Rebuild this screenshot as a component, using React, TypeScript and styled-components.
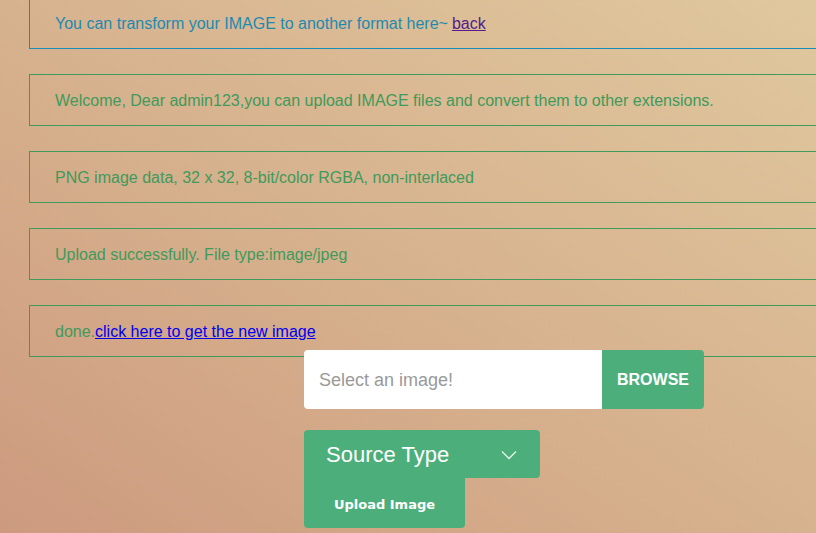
import React from "react";
import styled, { createGlobalStyle } from "styled-components";

const Global = createGlobalStyle`
  html, body { margin: 0; padding: 0; }
  body {
    width: 816px;
    height: 533px;
    overflow: hidden;
    font-family: "Liberation Sans", Arial, sans-serif;
    background: linear-gradient(to top right, #cd9a7f 0%, #d6b08d 45%, #e0c89e 100%);
  }
`;

const Page = styled.div`
  padding-left: 29px;
  margin-top: -3px;
  display: flex;
  flex-direction: column;
`;

const MsgBox = styled.div<{ $tone: "blue" | "green" }>`
  box-sizing: border-box;
  width: 820px;
  height: 52px;
  margin-bottom: 25px;
  padding: 2px 25px 0;
  display: flex;
  align-items: center;
  font-size: 16px;
  border: 1px solid ${(p) => (p.$tone === "blue" ? "#1a8cb8" : "#3f9a5b")};
  color: ${(p) => (p.$tone === "blue" ? "#1d8ab0" : "#3f9a5b")};
  white-space: nowrap;
`;

const Link = styled.a<{ $visited?: boolean }>`
  color: ${(p) => (p.$visited ? "#551a8b" : "#0000ee")};
  text-decoration: underline;
  margin-left: ${(p) => (p.$visited ? "4px" : "0")};
`;

const Form = styled.form`
  margin: -32px 0 0 275px;
  display: flex;
  flex-direction: column;
  align-items: flex-start;
  position: relative;
`;

const InputGroup = styled.div`
  display: flex;
  width: 400px;
  height: 59px;
`;

const FileInput = styled.div`
  flex: 1;
  background: #fff;
  border-radius: 4px 0 0 4px;
  display: flex;
  align-items: center;
  padding: 2px 0 0 15px;
  font-size: 18px;
  color: #9a9a9a;
`;

const BrowseButton = styled.div`
  width: 102px;
  background: #4caf7b;
  border-radius: 0 4px 4px 0;
  color: #fff;
  font-weight: bold;
  font-size: 16px;
  display: flex;
  align-items: center;
  justify-content: center;
  box-sizing: border-box;
`;

const Select = styled.div`
  margin-top: 21px;
  box-sizing: border-box;
  width: 236px;
  height: 48px;
  background: #4caf7b;
  border-radius: 4px 4px 4px 0;
  color: #fff;
  font-size: 22px;
  display: flex;
  align-items: center;
  justify-content: space-between;
  padding: 2px 23px 0 22px;
`;

const UploadButton = styled.button`
  box-sizing: border-box;
  width: 161px;
  height: 50px;
  border: none;
  background: #4caf7b;
  border-radius: 0 0 4px 4px;
  color: #fff;
  font-family: "DejaVu Sans", Verdana, sans-serif;
  font-weight: bold;
  font-size: 13px;
  padding: 2px 0 0;
`;

export default function App() {
  return (
    <>
      <Global />
      <Page>
        <MsgBox $tone="blue">
          You can transform your IMAGE to another format here~
          <Link $visited href="#">back</Link>
        </MsgBox>
        <MsgBox $tone="green">
          Welcome, Dear admin123,you can upload IMAGE files and convert them to other extensions.
        </MsgBox>
        <MsgBox $tone="green">PNG image data, 32 x 32, 8-bit/color RGBA, non-interlaced</MsgBox>
        <MsgBox $tone="green">Upload successfully. File type:image/jpeg</MsgBox>
        <MsgBox $tone="green">
          done.<Link href="#">click here to get the new image</Link>
        </MsgBox>
        <Form onSubmit={(e) => e.preventDefault()}>
          <InputGroup>
            <FileInput>Select an image!</FileInput>
            <BrowseButton>BROWSE</BrowseButton>
          </InputGroup>
          <Select>
            <span>Source Type</span>
            <svg width="16" height="10" viewBox="0 0 16 10">
              <polyline points="1,1.5 8,8.5 15,1.5" fill="none" stroke="#e6f3ea" strokeWidth="1.3" />
            </svg>
          </Select>
          <UploadButton type="button">Upload Image</UploadButton>
        </Form>
      </Page>
    </>
  );
}
